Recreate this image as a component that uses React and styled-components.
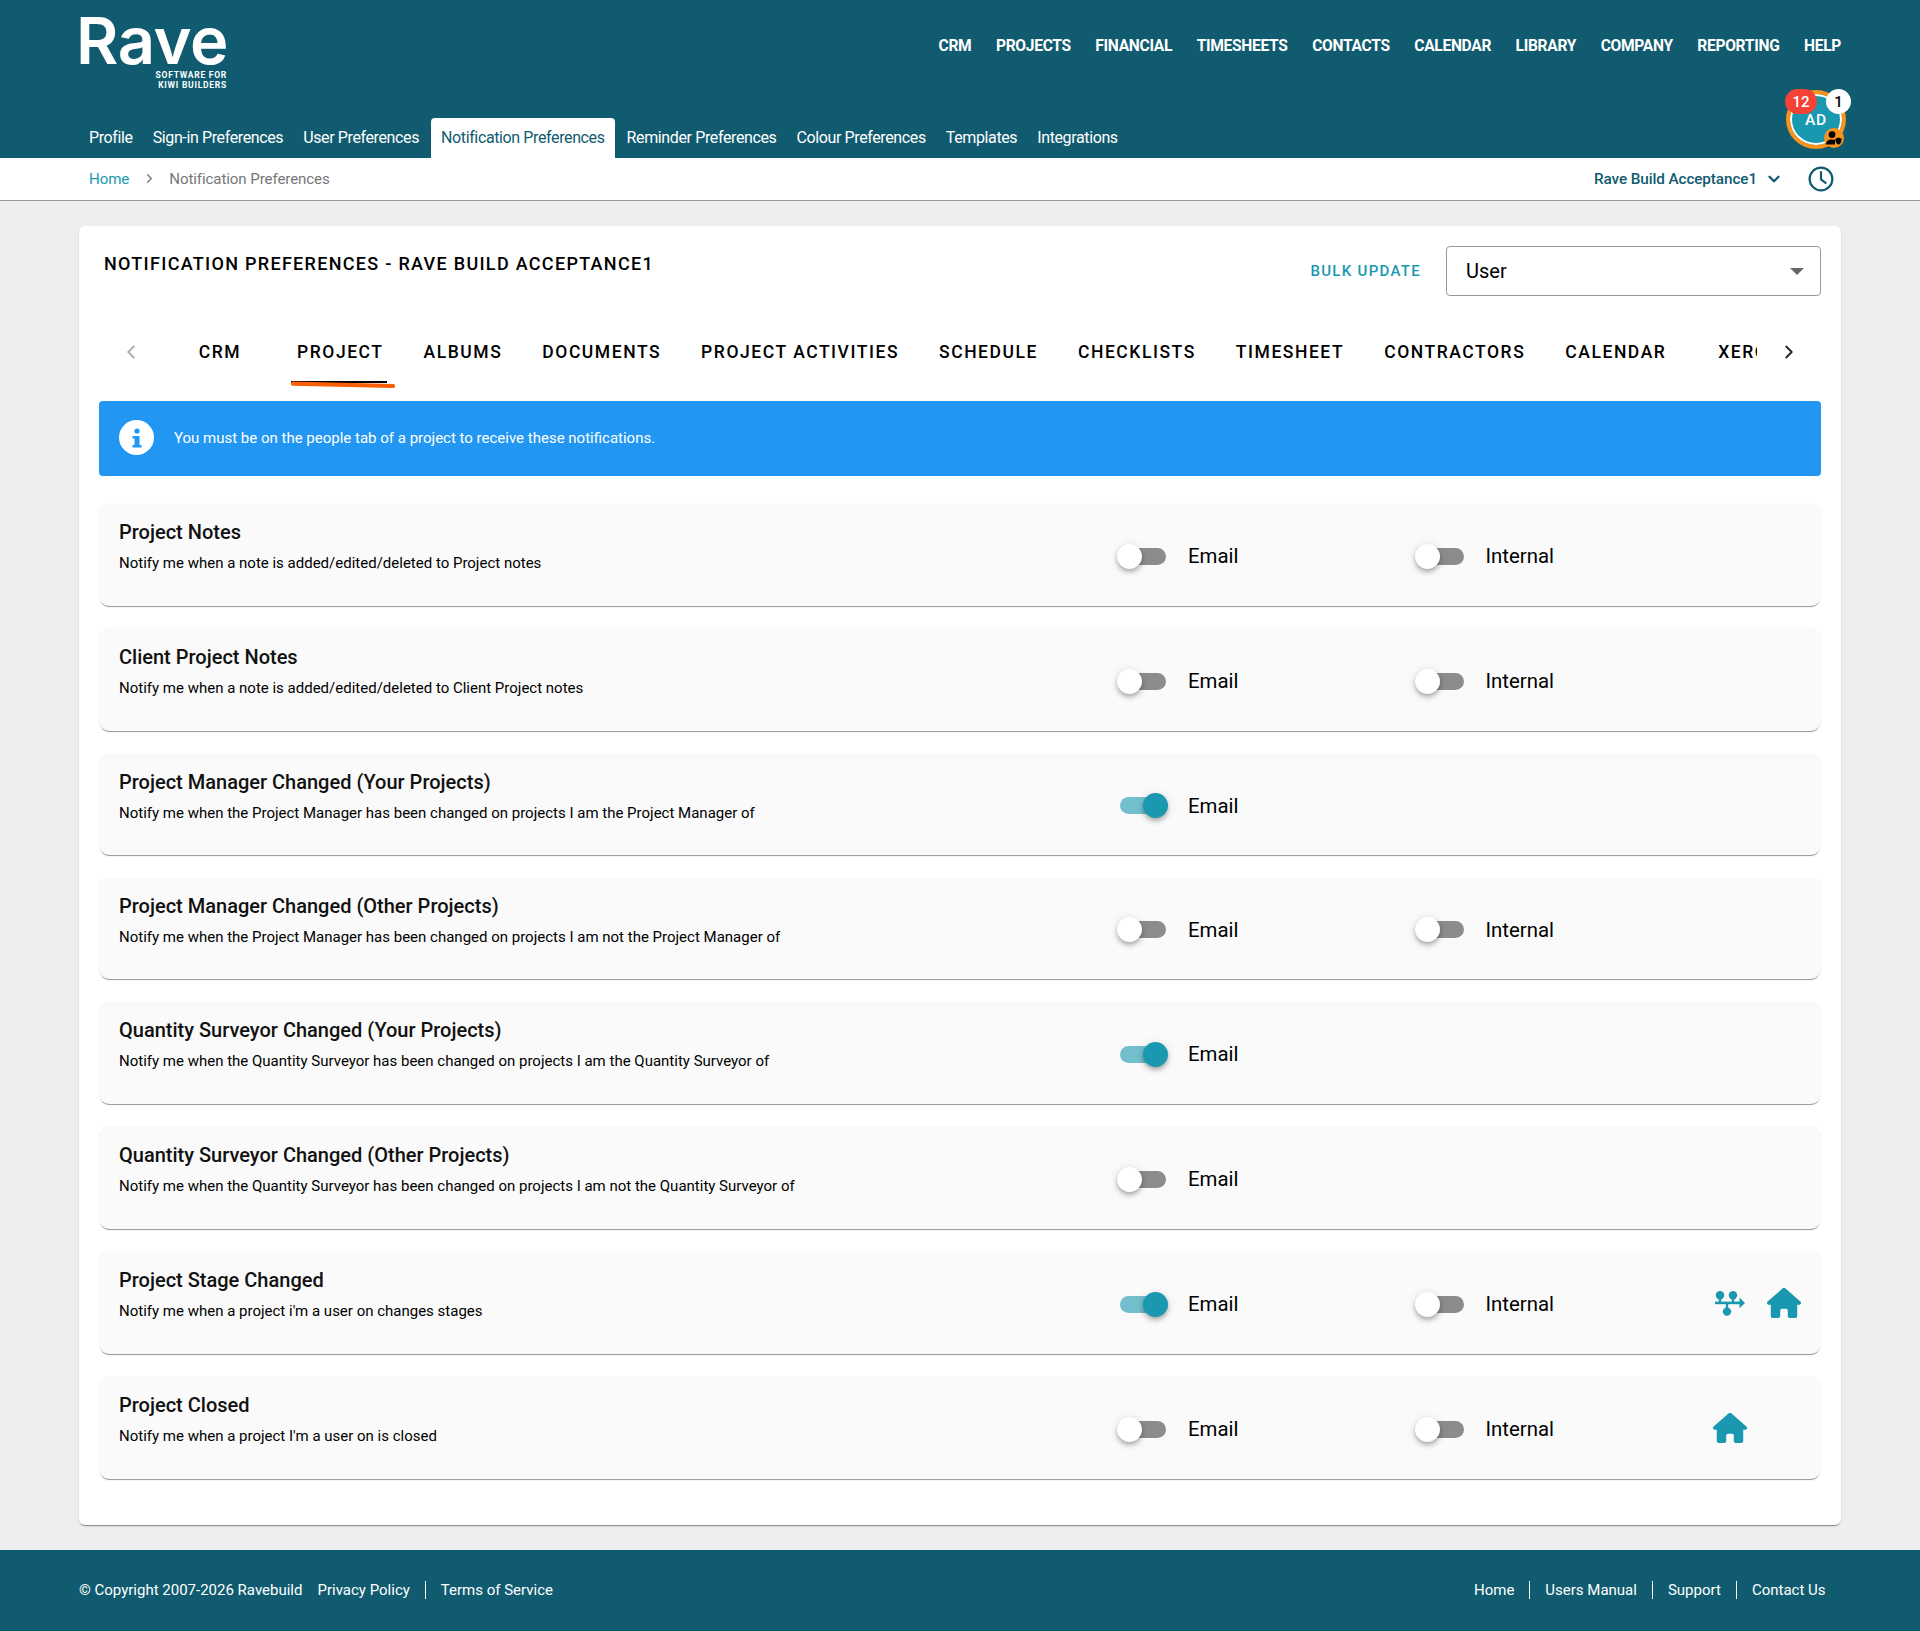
import React from 'react';
import styled, { createGlobalStyle } from 'styled-components';
import { FaHouse } from 'react-icons/fa6';
import { FiChevronDown, FiChevronLeft, FiChevronRight } from 'react-icons/fi';

const GlobalStyle = createGlobalStyle`
  * { box-sizing: border-box; }
  html, body { margin: 0; padding: 0; }
  body {
    background: #eeeeee;
    color: #000;
    font-family: Roboto, 'Liberation Sans', sans-serif;
  }
`;

const Page = styled.div`
  width: 1920px;
  min-height: 1631px;
  display: flex;
  flex-direction: column;
`;

// ===================== Header =====================

const Header = styled.header`
  height: 158px;
  background: #105b6f;
  color: #fff;
  padding: 0 79px;
  display: flex;
  flex-direction: column;
`;

const TopRow = styled.div`
  height: 118px;
  display: flex;
  justify-content: space-between;
  align-items: flex-start;
`;

const Logo = styled.div`
  width: 148px;
  padding-top: 12px;
  display: flex;
  flex-direction: column;
  align-items: flex-end;
`;

const LogoWord = styled.div`
  font-family: Inter, Roboto, sans-serif;
  font-size: 65px;
  font-weight: 600;
  line-height: 58px;
  letter-spacing: -0.4px;
  align-self: flex-start;
  margin-left: -3px;
  white-space: nowrap;
`;

const LogoTag = styled.div`
  font-size: 8.5px;
  font-weight: 700;
  line-height: 10px;
  letter-spacing: 0.75px;
  text-align: right;
`;

const MainMenu = styled.nav`
  display: flex;
  gap: 24.5px;
  padding-top: 37px;
`;

const MainLink = styled.a`
  font-size: 15.58px;
  font-weight: 700;
  line-height: 19px;
  letter-spacing: -0.3px;
  color: #fff;
`;

const SubRow = styled.div`
  height: 40px;
  display: flex;
  align-items: stretch;
  position: relative;
`;

const SubLink = styled.a`
  display: flex;
  align-items: center;
  padding: 0 10px 2px;
  margin: 0 ${(p) => (p.$active ? '2px' : '0')};
  font-size: 16px;
  letter-spacing: -0.38px;
  border-radius: 4px 4px 0 0;
  color: ${(p) => (p.$active ? '#105b6f' : '#fff')};
  background: ${(p) => (p.$active ? '#fff' : 'transparent')};
`;

const Avatar = styled.div`
  position: absolute;
  right: -5px;
  top: -28px;
  width: 60px;
  height: 59px;
  padding-top: 1px;
  border-radius: 50%;
  background: #1a98b0;
  border: 4px solid #f7941d;
  box-shadow: inset 0 0 0 2px #fff;
  display: flex;
  align-items: center;
  justify-content: center;
  font-size: 15.5px;
  font-weight: 500;
  letter-spacing: 0.8px;
`;

const CountBadge = styled.span`
  position: absolute;
  top: -5px;
  left: ${(p) => (p.$light ? '36px' : '-5px')};
  min-width: ${(p) => (p.$light ? '25px' : '32px')};
  height: 25px;
  border-radius: 13px;
  background: ${(p) => (p.$light ? '#fff' : '#f44336')};
  color: ${(p) => (p.$light ? '#000' : '#fff')};
  display: flex;
  align-items: center;
  justify-content: center;
  font-size: 15px;
  font-weight: 500;
  letter-spacing: 0;
`;

const RoleBadge = styled.span`
  position: absolute;
  right: -2px;
  bottom: -3px;
  width: 20px;
  height: 20px;
  border-radius: 50%;
  background: #f7941d;
  display: flex;
  align-items: center;
  justify-content: center;
`;

// ===================== Breadcrumb =====================

const CrumbBar = styled.div`
  height: 43px;
  background: #fff;
  border-bottom: 1px solid #999;
  padding: 0 79px 1px 89px;
  display: flex;
  align-items: center;
  font-size: 15.1px;
  letter-spacing: -0.1px;
`;

const CrumbHome = styled.a`
  color: #1a98b0;
`;

const CrumbSep = styled.span`
  display: flex;
  margin: 0 12.5px;
  color: #777;
`;

const CrumbCurrent = styled.span`
  color: #777;
`;

const CompanyPicker = styled.div`
  margin-left: auto;
  display: flex;
  align-items: center;
  gap: 8px;
  color: #105b6f;
  font-size: 15.3px;
  font-weight: 500;
`;

const ClockWrap = styled.span`
  display: flex;
  margin-left: 25px;
  margin-right: 7px;
`;

// ===================== Card =====================

const Main = styled.main`
  flex: 1;
  padding: 25px 79px 25px;
`;

const Card = styled.section`
  height: 1299px;
  background: #fff;
  border-radius: 6px;
  box-shadow: 0 2px 1px -1px rgba(0, 0, 0, 0.35), 0 1px 2px rgba(0, 0, 0, 0.14);
  padding: 20px 20px 0;
`;

const CardHead = styled.div`
  display: flex;
  align-items: flex-start;
  height: 50px;
`;

const CardTitle = styled.h1`
  margin: 8px 0 0 5px;
  font-size: 18px;
  font-weight: 500;
  line-height: 20px;
  letter-spacing: 1.3px;
`;

const BulkUpdate = styled.a`
  margin: 16px 25px 0 auto;
  color: #1a98b0;
  font-size: 15px;
  font-weight: 500;
  line-height: 18px;
  letter-spacing: 1.3px;
`;

const SelectBox = styled.div`
  width: 375px;
  height: 50px;
  border: 1px solid #999;
  border-radius: 4px;
  padding: 0 19px;
  display: flex;
  align-items: center;
  justify-content: space-between;
  font-size: 20px;
`;

const SelectCaret = styled.span`
  width: 0;
  height: 0;
  border-left: 7px solid transparent;
  border-right: 7px solid transparent;
  border-top: 7px solid #666;
  margin-top: 1px;
  margin-right: -3px;
`;

const TabBar = styled.div`
  display: flex;
  height: 84px;
  margin-top: 21px;
`;

const TabArrow = styled.div`
  width: 64px;
  flex: none;
  display: flex;
  align-items: center;
  justify-content: center;
  height: 70px;
  color: ${(p) => (p.$dim ? '#aaa' : '#222')};
`;

const TabStrip = styled.div`
  flex: 1;
  display: flex;
  overflow: hidden;
  height: 76px;
`;

const Tab = styled.a`
  position: relative;
  flex: none;
  min-width: 114px;
  height: 70px;
  padding: 0 20px;
  display: flex;
  align-items: center;
  justify-content: center;
  font-size: 17.5px;
  font-weight: 500;
  letter-spacing: 1.55px;
  white-space: nowrap;
`;

const TabMark = styled.svg`
  position: absolute;
  left: 14px;
  bottom: -3px;
`;

const Alert = styled.div`
  height: 75px;
  border-radius: 4px;
  background: #2196f3;
  color: #fff;
  padding: 0 20px 2px;
  display: flex;
  align-items: center;
  gap: 20px;
  font-size: 15px;
  margin-bottom: 28px;
`;

const InfoDot = styled.span`
  width: 35px;
  height: 35px;
  border-radius: 50%;
  background: #fff;
  color: #2196f3;
  display: flex;
  align-items: center;
  justify-content: center;
  flex: none;
`;

const RowList = styled.div`
  display: flex;
  flex-direction: column;
  gap: 23px;
`;

const Row = styled.div`
  height: ${(p) => p.$h}px;
  background: #fafafa;
  border-radius: 10px;
  box-shadow: 0 2px 1px -1px rgba(0, 0, 0, 0.4), 0 0 2px rgba(0, 0, 0, 0.07);
  padding: 0 20px;
  display: grid;
  grid-template-columns: 1fr 297.5px 296.5px 90px;
  align-items: center;
`;

const RowText = styled.div`
  align-self: start;
  padding-top: 14px;
`;

const RowTitle = styled.div`
  font-size: 20px;
  font-weight: 500;
  line-height: 28px;
  color: #111;
`;

const RowDesc = styled.div`
  margin-top: 6px;
  font-size: 15px;
  line-height: 22px;
`;

const SwitchCell = styled.div`
  display: flex;
  align-items: center;
  gap: 20px;
  padding-top: 2px;
  font-size: 20.4px;
`;

const Track = styled.span`
  position: relative;
  flex: none;
  display: block;
  width: 51px;
  height: 25px;
  &::before {
    content: '';
    position: absolute;
    left: 3px;
    right: 2px;
    top: 4px;
    height: 17px;
    border-radius: 9px;
    background: ${(p) => (p.$on ? '#1a98b0' : '#8c8c8c')};
    opacity: ${(p) => (p.$on ? 0.6 : 1)};
  }
`;

const Thumb = styled.span`
  position: absolute;
  top: 0;
  left: ${(p) => (p.$on ? '26px' : '0')};
  width: 25px;
  height: 25px;
  border-radius: 50%;
  background: ${(p) => (p.$on ? '#1a98b0' : '#fff')};
  box-shadow: 0 2px 4px -1px rgba(0, 0, 0, 0.2), 0 4px 5px rgba(0, 0, 0, 0.14), 0 1px 10px rgba(0, 0, 0, 0.12);
`;

const IconCell = styled.div`
  display: flex;
  align-items: center;
  justify-content: ${(p) => (p.$single ? 'flex-start' : 'space-between')};
  color: #1a98b0;
  padding-left: ${(p) => (p.$single ? '2px' : '4px')};
`;

// ===================== Footer =====================

const Footer = styled.footer`
  height: 81px;
  background: #105b6f;
  color: #fff;
  padding: 0 79px 2px;
  display: flex;
  align-items: center;
  justify-content: space-between;
  font-size: 15px;
`;

const FooterGroup = styled.div`
  display: flex;
  align-items: center;
`;

const FootLink = styled.a`
  padding: 0 ${(p) => (p.$last ? '15.5px' : '15px')} 0 15px;
  line-height: 18px;
  border-right: ${(p) => (p.$last ? '0' : '1px solid #fff')};
`;

const menu = ['CRM', 'PROJECTS', 'FINANCIAL', 'TIMESHEETS', 'CONTACTS', 'CALENDAR', 'LIBRARY', 'COMPANY', 'REPORTING', 'HELP'];
const subMenu = ['Profile', 'Sign-in Preferences', 'User Preferences', 'Notification Preferences', 'Reminder Preferences', 'Colour Preferences', 'Templates', 'Integrations'];
const tabs = ['CRM', 'PROJECT', 'ALBUMS', 'DOCUMENTS', 'PROJECT ACTIVITIES', 'SCHEDULE', 'CHECKLISTS', 'TIMESHEET', 'CONTRACTORS', 'CALENDAR', 'XERO'];

const rows = [
  { title: 'Project Notes', desc: 'Notify me when a note is added/edited/deleted to Project notes', h: 102, email: false, internal: false },
  { title: 'Client Project Notes', desc: 'Notify me when a note is added/edited/deleted to Client Project notes', h: 102, email: false, internal: false },
  { title: 'Project Manager Changed (Your Projects)', desc: 'Notify me when the Project Manager has been changed on projects I am the Project Manager of', h: 101, email: true },
  { title: 'Project Manager Changed (Other Projects)', desc: 'Notify me when the Project Manager has been changed on projects I am not the Project Manager of', h: 101, email: false, internal: false },
  { title: 'Quantity Surveyor Changed (Your Projects)', desc: 'Notify me when the Quantity Surveyor has been changed on projects I am the Quantity Surveyor of', h: 102, email: true },
  { title: 'Quantity Surveyor Changed (Other Projects)', desc: 'Notify me when the Quantity Surveyor has been changed on projects I am not the Quantity Surveyor of', h: 102, email: false },
  { title: 'Project Stage Changed', desc: "Notify me when a project i'm a user on changes stages", h: 102, email: true, internal: false, icons: 'both' },
  { title: 'Project Closed', desc: "Notify me when a project I'm a user on is closed", h: 102, email: false, internal: false, icons: 'home' },
];

function Switch({ on, label }) {
  return (
    <SwitchCell>
      <Track $on={on}>
        <Thumb $on={on} />
      </Track>
      {label}
    </SwitchCell>
  );
}

function StageIcon() {
  return (
    <svg width="30" height="25" viewBox="0 0 30 25" fill="#1a98b0">
      <circle cx="5" cy="4.2" r="4.2" />
      <circle cx="18" cy="4.2" r="4.2" />
      <circle cx="12" cy="20.6" r="4.2" />
      <rect x="0" y="10.6" width="26" height="2.6" />
      <rect x="3.8" y="6" width="2.4" height="5" />
      <rect x="16.8" y="6" width="2.4" height="5" />
      <rect x="10.8" y="12" width="2.4" height="6" />
      <path d="M24.5 6.6l5.5 5.3-5.5 5.3z" />
    </svg>
  );
}

function App() {
  return (
    <Page>
      <GlobalStyle />
      <Header>
        <TopRow>
          <Logo>
            <LogoWord>Rave</LogoWord>
            <LogoTag>
              SOFTWARE FOR
              <br />
              KIWI BUILDERS
            </LogoTag>
          </Logo>
          <MainMenu>
            {menu.map((item) => (
              <MainLink key={item}>{item}</MainLink>
            ))}
          </MainMenu>
        </TopRow>
        <SubRow>
          {subMenu.map((item) => (
            <SubLink key={item} $active={item === 'Notification Preferences'}>
              {item}
            </SubLink>
          ))}
          <Avatar>
            AD
            <CountBadge>12</CountBadge>
            <CountBadge $light>1</CountBadge>
            <RoleBadge>
              <svg width="16" height="14" viewBox="0 0 16 14" fill="#000">
                <circle cx="6" cy="3.6" r="3.4" />
                <path d="M0 13.5c0-3.4 2.4-5 6-5 1.2 0 2.2.2 3 .5v4.5z" />
                <path d="M12.5 6.5l3.2 1.2c0 3-1 5-3.2 6-2.2-1-3.2-3-3.2-6z" />
              </svg>
            </RoleBadge>
          </Avatar>
        </SubRow>
      </Header>

      <CrumbBar>
        <CrumbHome>Home</CrumbHome>
        <CrumbSep>
          <FiChevronRight size={15} />
        </CrumbSep>
        <CrumbCurrent>Notification Preferences</CrumbCurrent>
        <CompanyPicker>
          Rave Build Acceptance1
          <FiChevronDown size={18} strokeWidth={3} />
        </CompanyPicker>
        <ClockWrap>
          <svg width="26" height="26" viewBox="0 0 26 26" fill="none" stroke="#105b6f" strokeWidth="2.2">
            <circle cx="13" cy="13" r="11.4" />
            <path d="M13 6v7.5l4.6 3.4" strokeLinecap="round" />
          </svg>
        </ClockWrap>
      </CrumbBar>

      <Main>
        <Card>
          <CardHead>
            <CardTitle>NOTIFICATION PREFERENCES - RAVE BUILD ACCEPTANCE1</CardTitle>
            <BulkUpdate>BULK UPDATE</BulkUpdate>
            <SelectBox>
              User
              <SelectCaret />
            </SelectBox>
          </CardHead>

          <TabBar>
            <TabArrow $dim>
              <FiChevronLeft size={22} />
            </TabArrow>
            <TabStrip>
              {tabs.map((tab) => (
                <Tab key={tab}>
                  {tab}
                  {tab === 'PROJECT' && (
                    <TabMark width="104" height="10" viewBox="0 0 104 10">
                      <rect x="0" y="1" width="96" height="2" fill="#000" />
                      <path d="M2 3.6L102 6" stroke="#f95f02" strokeWidth="4.2" strokeLinecap="round" />
                    </TabMark>
                  )}
                </Tab>
              ))}
            </TabStrip>
            <TabArrow>
              <FiChevronRight size={22} />
            </TabArrow>
          </TabBar>

          <Alert>
            <InfoDot>
              <svg width="12" height="20" viewBox="0 0 12 20" fill="currentColor">
                <circle cx="6" cy="3" r="2.6" />
                <path d="M1.5 8h7v9h2v2.5H1.5V17h2v-6.5h-2z" />
              </svg>
            </InfoDot>
            You must be on the people tab of a project to receive these notifications.
          </Alert>

          <RowList>
            {rows.map((row) => (
              <Row key={row.title} $h={row.h}>
                <RowText>
                  <RowTitle>{row.title}</RowTitle>
                  <RowDesc>{row.desc}</RowDesc>
                </RowText>
                <Switch on={row.email} label="Email" />
                {row.internal !== undefined ? <Switch on={row.internal} label="Internal" /> : <div />}
                {row.icons === 'both' && (
                  <IconCell>
                    <StageIcon />
                    <FaHouse size={34} />
                  </IconCell>
                )}
                {row.icons === 'home' && (
                  <IconCell $single>
                    <FaHouse size={34} />
                  </IconCell>
                )}
              </Row>
            ))}
          </RowList>
        </Card>
      </Main>

      <Footer>
        <FooterGroup>
          <span>© Copyright 2007-2026 Ravebuild</span>
          <FootLink>Privacy Policy</FootLink>
          <FootLink $last>Terms of Service</FootLink>
        </FooterGroup>
        <FooterGroup>
          <FootLink>Home</FootLink>
          <FootLink>Users Manual</FootLink>
          <FootLink>Support</FootLink>
          <FootLink $last>Contact Us</FootLink>
        </FooterGroup>
      </Footer>
    </Page>
  );
}

export default App;
